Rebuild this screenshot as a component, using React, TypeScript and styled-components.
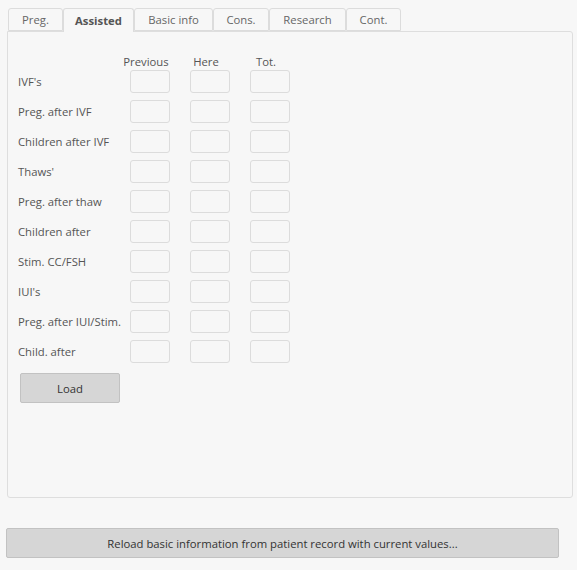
import React from "react";
import styled, { createGlobalStyle } from "styled-components";

const Global = createGlobalStyle`
  html, body { margin: 0; padding: 0; background: #f7f7f7; }
  body { font-family: "Open Sans", "Noto Sans", sans-serif; font-size: 11.3px; color: #555; }
`;

const Page = styled.div`
  width: 577px;
  height: 570px;
  display: flex;
  flex-direction: column;
  box-sizing: border-box;
  padding: 8px 0 0 0;
`;

const TabBar = styled.div`
  display: flex;
  padding-left: 8px;
  height: 23px;
  position: relative;
  z-index: 1;
`;

const Tab = styled.div<{ $w: number; $active?: boolean }>`
  width: ${(p) => p.$w}px;
  box-sizing: border-box;
  height: ${(p) => (p.$active ? 24 : 23)}px;
  border: 1px solid #dcdcdc;
  border-bottom: ${(p) => (p.$active ? "none" : "1px solid #dcdcdc")};
  border-radius: 3px 3px 0 0;
  background: #f7f7f7;
  display: flex;
  align-items: center;
  justify-content: center;
  font-size: 11.3px;
  font-weight: ${(p) => (p.$active ? 700 : 400)};
  color: ${(p) => (p.$active ? "#555" : "#666")};
  padding-bottom: ${(p) => (p.$active ? 1 : 0)}px;
`;

const Panel = styled.div`
  margin-left: 7px;
  width: 566px;
  height: 467px;
  box-sizing: border-box;
  border: 1px solid #dedede;
  border-radius: 0 3px 3px 3px;
  padding: 21px 0 0 10px;
  background: #f7f7f7;
`;

const Grid = styled.div`
  display: grid;
  grid-template-columns: 92px 40px 40px 40px;
  column-gap: 20px;
  row-gap: 7px;
  align-items: center;
`;

const Header = styled.div`
  display: flex;
  justify-content: center;
  margin-right: 8px;
  white-space: nowrap;
  color: #555;
  height: 17px;
  line-height: 17px;
  margin-bottom: -7px;
`;

const Label = styled.div`
  color: #555;
  white-space: nowrap;
`;

const Input = styled.div`
  width: 40px;
  height: 23px;
  box-sizing: border-box;
  border: 1px solid #dcdcdc;
  border-radius: 3px;
  background: #f7f7f7;
`;

const Button = styled.div<{ $w: number; $ml: number }>`
  width: ${(p) => p.$w}px;
  margin-left: ${(p) => p.$ml}px;
  height: 30px;
  box-sizing: border-box;
  border: 1px solid #c2c2c2;
  border-radius: 2px;
  background: #d6d6d6;
  color: #333;
  display: flex;
  align-items: center;
  justify-content: center;
  font-size: 11.3px;
`;

const LoadRow = styled.div`
  margin-top: 10px;
`;

const Bottom = styled.div`
  margin-top: 30px;
`;

const tabs: [string, number][] = [
  ["Preg.", 55],
  ["Assisted", 71],
  ["Basic info", 79],
  ["Cons.", 56],
  ["Research", 77],
  ["Cont.", 55],
];

const rows = [
  "IVF's",
  "Preg. after IVF",
  "Children after IVF",
  "Thaws'",
  "Preg. after thaw",
  "Children after",
  "Stim. CC/FSH",
  "IUI's",
  "Preg. after IUI/Stim.",
  "Child. after",
];

export default function App() {
  return (
    <Page>
      <Global />
      <TabBar>
        {tabs.map(([t, w]) => (
          <Tab key={t} $w={w} $active={t === "Assisted"}>
            {t}
          </Tab>
        ))}
      </TabBar>
      <Panel>
        <Grid>
          <div />
          <Header>Previous</Header>
          <Header>Here</Header>
          <Header>Tot.</Header>
          {rows.map((r) => (
            <React.Fragment key={r}>
              <Label>{r}</Label>
              <Input />
              <Input />
              <Input />
            </React.Fragment>
          ))}
        </Grid>
        <LoadRow>
          <Button $w={100} $ml={2}>Load</Button>
        </LoadRow>
      </Panel>
      <Bottom>
        <Button $w={553} $ml={6}>
          Reload basic information from patient record with current values...
        </Button>
      </Bottom>
    </Page>
  );
}
